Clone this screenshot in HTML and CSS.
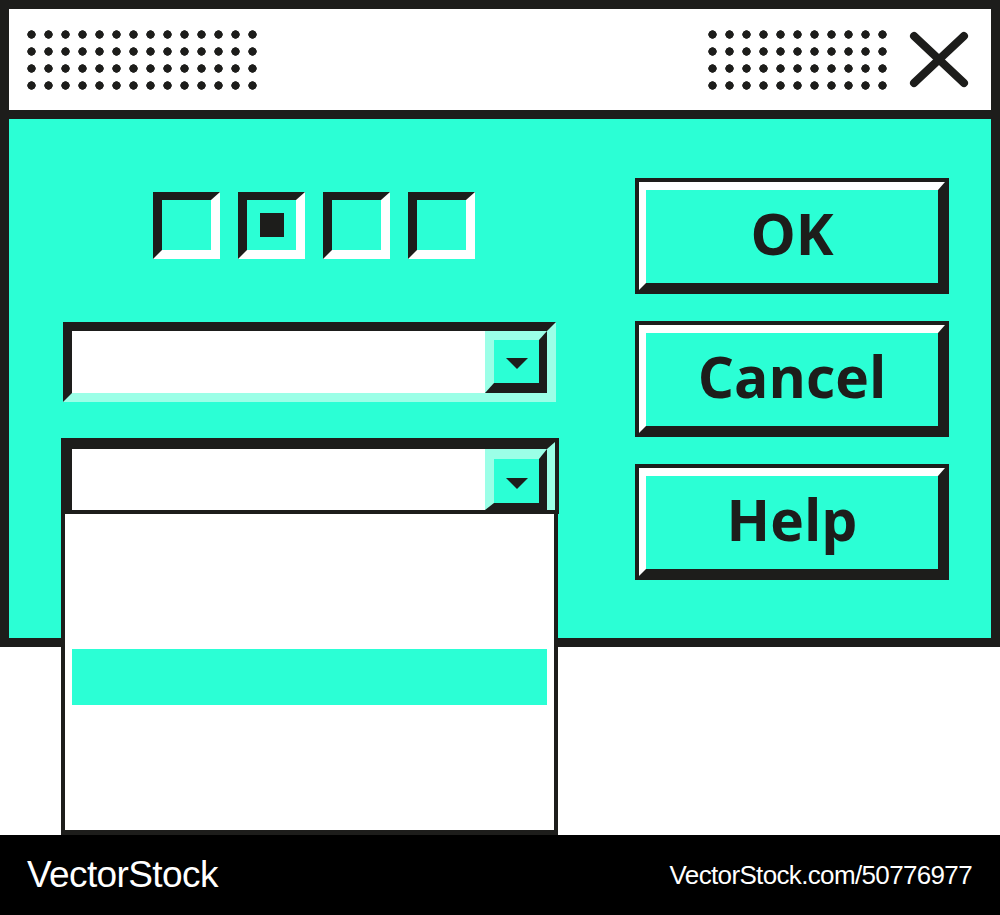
FILE: index.html
```html
<!DOCTYPE html>
<html lang="en">
<head>
    <meta charset="UTF-8">
    <meta name="viewport" content="width=device-width, initial-scale=1.0">
    <title>Dialog Window</title>
    <link rel="stylesheet" href="styles.css">
</head>
<body>

    <div class="window">
        <!-- Title bar -->
        <div class="title-bar">
            <div class="dots dots-left"></div>
            <div class="title-right">
                <div class="dots dots-right"></div>
                <svg class="close-icon" width="60" height="60" viewBox="0 0 60 60">
                    <line x1="5" y1="6" x2="55" y2="53" />
                    <line x1="55" y1="6" x2="5" y2="53" />
                </svg>
            </div>
        </div>

        <!-- Dialog body -->
        <div class="dialog-body">
            <div class="left-col">
                <div class="checks">
                    <div class="check"></div>
                    <div class="check checked"><span class="mark"></span></div>
                    <div class="check"></div>
                    <div class="check"></div>
                </div>

                <div class="combo">
                    <div class="combo-field"></div>
                    <div class="combo-btn"><span class="arrow"></span></div>
                </div>

                <div class="combo-open">
                    <div class="combo-inner">
                        <div class="combo-field"></div>
                        <div class="combo-btn open-btn"><span class="arrow"></span></div>
                    </div>
                    <div class="dropdown">
                        <div class="dropdown-item selected"></div>
                    </div>
                </div>
            </div>

            <div class="right-col">
                <div class="btn"><div class="btn-face">OK</div></div>
                <div class="btn"><div class="btn-face">Cancel</div></div>
                <div class="btn"><div class="btn-face">Help</div></div>
            </div>
        </div>
    </div>

    <div class="page-fill"></div>

    <div class="footer">
        <span class="brand">VectorStock</span>
        <span class="ref">VectorStock.com/50776977</span>
    </div>

</body>
</html>
```

FILE: styles.css
```css
* {
    margin: 0;
    padding: 0;
    box-sizing: border-box;
}

body {
    width: 1000px;
    background: #ffffff;
    font-family: "Open Sans", "Noto Sans", sans-serif;
}

/* Window frame */
.window {
    width: 1000px;
    height: 647px;
    border: 9px solid #1d1d1b;
    background: #2bffd5;
}

.title-bar {
    height: 110px;
    background: #ffffff;
    border-bottom: 9px solid #1d1d1b;
    display: flex;
    align-items: center;
    justify-content: space-between;
    padding: 0 22px 0 13.5px;
}

.title-right {
    display: flex;
    align-items: center;
    gap: 18.5px;
}

.dots {
    height: 68px;
    background-image: radial-gradient(circle at center, #1d1d1b 3.9px, transparent 4.5px);
    background-size: 17px 17px;
}

.dots-left {
    width: 238px;
}

.dots-right {
    width: 187px;
}

.close-icon line {
    stroke: #1d1d1b;
    stroke-width: 8;
    stroke-linecap: round;
}

/* Body */
.dialog-body {
    display: flex;
    height: 519px;
    padding-left: 52px;
}

.left-col {
    width: 498px;
    padding-top: 73px;
    display: flex;
    flex-direction: column;
}

.checks {
    display: flex;
    gap: 18px;
    margin-left: 92px;
}

.check {
    width: 67px;
    height: 67px;
    border-style: solid;
    border-width: 8px 9px 9px 9px;
    border-color: #1d1d1b #ffffff #ffffff #1d1d1b;
    display: flex;
    align-items: center;
    justify-content: center;
}

.check .mark {
    width: 24px;
    height: 24px;
    background: #1d1d1b;
}

/* Combo boxes */
.combo {
    width: 493px;
    height: 80px;
    margin: 63px 0 0 2px;
    border: 9px solid;
    border-color: #1d1d1b #9bffe7 #9bffe7 #1d1d1b;
    display: flex;
}

.combo-field {
    flex: 1;
    background: #ffffff;
}

.combo-btn {
    width: 62px;
    border-style: solid;
    border-width: 9px 8px 10px 9px;
    border-color: #9bffe7 #1d1d1b #1d1d1b #9bffe7;
    background: #2bffd5;
    display: flex;
    align-items: center;
    justify-content: center;
}

.arrow {
    width: 0;
    height: 0;
    margin-top: 4px;
    border-left: 11.5px solid transparent;
    border-right: 11.5px solid transparent;
    border-top: 11px solid #1d1d1b;
}

.combo-open {
    position: relative;
    width: 498px;
    height: 76px;
    margin-top: 36px;
    border: 4px solid #1d1d1b;
}

.combo-inner {
    height: 100%;
    display: flex;
    border-style: solid;
    border-width: 7px 8px 0 7px;
    border-color: #1d1d1b #9bffe7 #9bffe7 #1d1d1b;
}

.open-btn {
    border-width: 10px 8px 7px 9px;
}

.dropdown {
    position: absolute;
    left: -4px;
    top: 72px;
    width: 497px;
    height: 321px;
    background: #ffffff;
    border: 4px solid #1d1d1b;
    border-top: none;
    border-bottom-width: 5px;
    padding: 135px 7px 0 7px;
}

.dropdown-item {
    height: 56px;
}

.dropdown-item.selected {
    background: #2bffd5;
}

/* Buttons */
.right-col {
    width: 314px;
    margin-left: 76px;
    padding-top: 59px;
    display: flex;
    flex-direction: column;
    gap: 27px;
}

.btn {
    height: 116px;
    border: 4px solid #1d1d1b;
}

.btn-face {
    height: 100%;
    border-style: solid;
    border-width: 8px 7px 7px 7px;
    border-color: #ffffff #1d1d1b #1d1d1b #ffffff;
    display: flex;
    align-items: center;
    justify-content: center;
    padding-bottom: 7px;
    font-size: 57px;
    font-weight: 700;
    color: #1d1d1b;
}

/* Area under the window */
.page-fill {
    height: 188px;
}

.footer {
    height: 80px;
    background: #000000;
    color: #ffffff;
    font-family: "Liberation Sans", Arial, sans-serif;
    display: flex;
    align-items: center;
    justify-content: space-between;
    padding: 0 28px 0 27px;
}

.brand {
    font-size: 37px;
    letter-spacing: -0.6px;
}

.ref {
    font-size: 26px;
    letter-spacing: -0.65px;
}
```
